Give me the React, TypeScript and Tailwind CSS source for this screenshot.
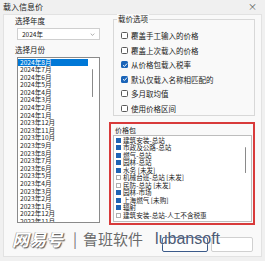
import React from 'react';

const months: string[] = [
  '2024年8月', '2024年7月', '2024年6月', '2024年5月', '2024年4月', '2024年3月', '2024年2月', '2024年1月',
  '2023年12月', '2023年11月', '2023年10月', '2023年9月', '2023年8月', '2023年7月', '2023年6月', '2023年5月',
  '2023年4月', '2023年3月', '2023年2月', '2023年1月', '2022年12月', '2022年11月',
];

const options = [
  { label: '覆盖手工输入的价格', checked: false },
  { label: '覆盖上次载入的价格', checked: false },
  { label: '从价格包载入税率', checked: true },
  { label: '默认仅载入名称相匹配的', checked: true },
  { label: '多月取均值', checked: false },
  { label: '使用价格区间', checked: false },
];

const packages = [
  { label: '建筑安装-总站', checked: true },
  { label: '市政及公路-总站', checked: true },
  { label: '燃气-总站', checked: true },
  { label: '园林-总站', checked: true },
  { label: '水务 [未发]', checked: true },
  { label: '机械台班-总站 [未发]', checked: false },
  { label: '民防-总站 [未发]', checked: false },
  { label: '园林-市场', checked: true },
  { label: '上海燃气 [未购]', checked: true },
  { label: '辐射', checked: true },
  { label: '建筑安装-总站-人工不含税惠', checked: false },
];

const CheckBox: React.FC<{ checked: boolean }> = ({ checked }) =>
  checked ? (
    <span className="flex h-[7px] w-[7px] shrink-0 items-center justify-center rounded-[1.5px] bg-[#1a64b8]">
      <svg viewBox="0 0 8 8" className="h-[6px] w-[6px]">
        <path d="M1.3 4.2 L3.2 6 L6.8 2" fill="none" stroke="white" strokeWidth="1.3" />
      </svg>
    </span>
  ) : (
    <span className="h-[7px] w-[7px] shrink-0 rounded-[1.5px] border border-[#5a5a5a] bg-white" />
  );

const App: React.FC = () => {
  return (
    <div className="relative h-[261px] w-[265px] overflow-hidden bg-[#f0f0f0] font-['Noto_Sans_CJK_SC',sans-serif] text-[7.5px] text-[#1a1a1a]">
      {/* title bar */}
      <div className="flex h-[14px] items-center justify-between pl-[3px] pr-[8px]">
        <span className="text-[8px] leading-[10px]">载入信息价</span>
        <span className="text-[9px] leading-[10px] text-[#555]">×</span>
      </div>

      <div className="mx-[3px] flex h-[243px] flex-col border border-[#e2e2e2] bg-[#f9f9f9]">
        <div className="flex">
          {/* left column */}
          <div className="w-[105px] shrink-0 pl-[11px] pt-[1px]">
            <div className="leading-[10px]">选择年度</div>
            <div className="ml-[2px] mt-[2px] flex h-[12px] w-[83px] items-center justify-between border border-[#cfcfcf] bg-white pl-[4px] pr-[4px]">
              <span className="text-[6.5px] leading-[8px]">2024年</span>
              <svg viewBox="0 0 8 5" className="h-[3px] w-[5px]">
                <path d="M1 1 L4 4 L7 1" fill="none" stroke="#777" strokeWidth="1" />
              </svg>
            </div>
            <div className="mt-[5px] leading-[10px]">选择月份</div>
            <div className="relative ml-[2px] mt-[2px] h-[166px] w-[83px] overflow-hidden border border-[#8a8a8a] bg-white pt-[0.5px]">
              {months.map((m, i) => (
                <div
                  key={m}
                  className={
                    i === 0
                      ? 'h-[7.6px] w-[70px] bg-[#0078d7] pl-[2px] text-[6.6px] leading-[7.6px] text-white'
                      : 'h-[7.6px] pl-[2px] text-[6.6px] leading-[7.6px]'
                  }
                >
                  {m}
                </div>
              ))}
              <div className="absolute right-[6px] top-[11px] h-[28px] w-[1.5px] rounded-full bg-[#8a8a8a]" />
            </div>
          </div>

          {/* right column */}
          <div className="flex-1 pr-[6px] pt-[4px]">
            <div className="relative ml-[4px] h-[97px] border border-[#d8d8d8]">
              <span className="absolute left-[3px] top-[-6px] bg-[#f9f9f9] px-[1px] leading-[10px]">载价选项</span>
              <div className="flex flex-col gap-[5px] pl-[7px] pt-[11px]">
                {options.map((o) => (
                  <div key={o.label} className="flex h-[9.5px] items-center gap-[3px]">
                    <CheckBox checked={o.checked} />
                    <span className="leading-[9px]">{o.label}</span>
                  </div>
                ))}
              </div>
            </div>

            <div className="mt-[6px] h-[103px] border-2 border-[#d83a3a] pl-[2px] pr-[1px]">
              <div className="pl-[2px] pt-[2px] text-[7px] leading-[9px]">价格包</div>
              <div className="relative h-[87px] overflow-hidden border border-[#bdbdbd] bg-white pl-[2px] pt-[0.5px]">
                {packages.map((p) => (
                  <div key={p.label} className="flex h-[7.5px] items-center gap-[2px]">
                    <span
                      className={
                        p.checked
                          ? 'h-[5px] w-[5px] shrink-0 bg-[#2064b4]'
                          : 'h-[5px] w-[5px] shrink-0 border border-[#b0b0b0] bg-white'
                      }
                    />
                    <span className="whitespace-nowrap text-[6.6px] leading-[7.5px]">{p.label}</span>
                  </div>
                ))}
                <div className="absolute right-[5px] top-[11px] h-[26px] w-[1.5px] rounded-full bg-[#8a8a8a]" />
              </div>
            </div>
          </div>
        </div>

        {/* buttons */}
        <div className="mt-auto flex justify-end gap-[3px] pb-[4px] pr-[8px]">
          <div className="h-[15px] w-[46px] rounded-[2px] border border-[#3b5a8a] bg-[#fdfdfd]" />
          <div className="h-[15px] w-[42px] rounded-[2px] border border-[#d0d0d0] bg-white" />
        </div>
      </div>

      {/* watermark */}
      <div className="pointer-events-none absolute left-[12px] top-[229px] flex items-center whitespace-nowrap">
        <span className="text-[17px] font-bold italic leading-[20px] text-white [text-shadow:1px_1px_1px_#555,-0.5px_-0.5px_0_#888]">
          网易号
        </span>
        <span className="ml-[10px] text-[15px] leading-[20px] text-[#777] [text-shadow:0_0_2px_#fff]">|</span>
        <span className="ml-[6px] text-[15px] leading-[20px] text-[#6a6a6a] [text-shadow:0_0_2px_#fff]">鲁班软件</span>
        <span className="ml-[12px] font-['Liberation_Sans',sans-serif] text-[16px] leading-[20px] text-[#4d5a74] [text-shadow:0_0_2px_#fff]">
          lubansoft
        </span>
      </div>
    </div>
  );
};

export default App;
